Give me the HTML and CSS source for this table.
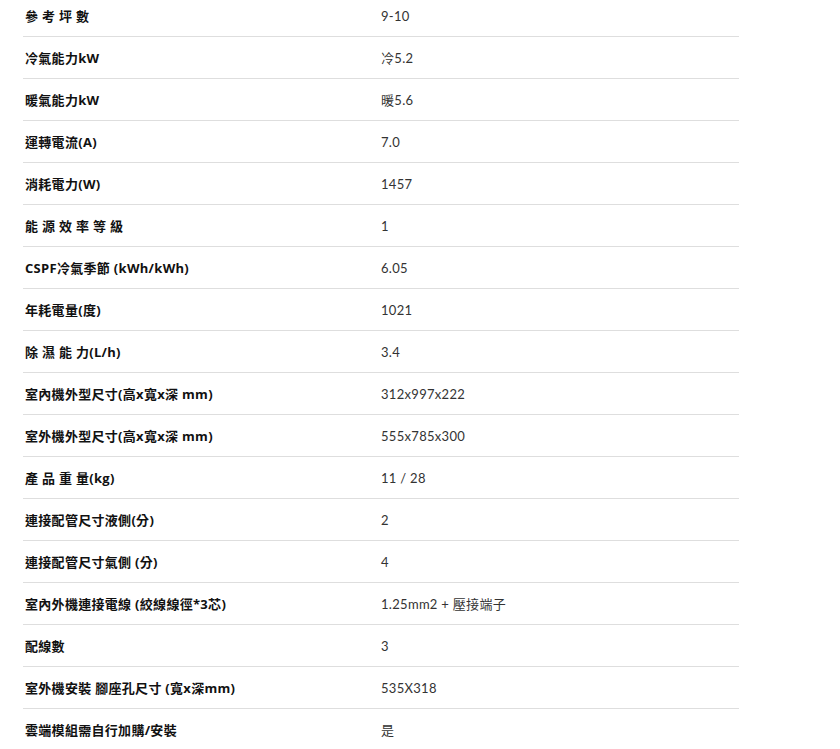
FILE: index.html
```html
<!DOCTYPE html>
<html lang="zh-Hant">
<head>
<meta charset="utf-8">
<link rel="stylesheet" href="styles.css">
</head>
<body>
<div class="spec">
  <div class="row"><div class="k">參 考 坪 數</div><div class="v">9-10</div></div>
  <div class="row"><div class="k">冷氣能力kW</div><div class="v">冷5.2</div></div>
  <div class="row"><div class="k">暖氣能力kW</div><div class="v">暖5.6</div></div>
  <div class="row"><div class="k">運轉電流(A)</div><div class="v">7.0</div></div>
  <div class="row"><div class="k">消耗電力(W)</div><div class="v">1457</div></div>
  <div class="row"><div class="k">能 源 效 率 等 級</div><div class="v">1</div></div>
  <div class="row"><div class="k">CSPF冷氣季節 (kWh/kWh)</div><div class="v">6.05</div></div>
  <div class="row"><div class="k">年耗電量(度)</div><div class="v">1021</div></div>
  <div class="row"><div class="k">除 濕 能 力(L/h)</div><div class="v">3.4</div></div>
  <div class="row"><div class="k">室內機外型尺寸(高x寬x深 mm)</div><div class="v">312x997x222</div></div>
  <div class="row"><div class="k">室外機外型尺寸(高x寬x深 mm)</div><div class="v">555x785x300</div></div>
  <div class="row"><div class="k">產 品 重 量(kg)</div><div class="v">11 / 28</div></div>
  <div class="row"><div class="k">連接配管尺寸液側(分)</div><div class="v">2</div></div>
  <div class="row"><div class="k">連接配管尺寸氣側 (分)</div><div class="v">4</div></div>
  <div class="row"><div class="k">室內外機連接電線 (絞線線徑*3芯)</div><div class="v">1.25mm2 + 壓接端子</div></div>
  <div class="row"><div class="k">配線數</div><div class="v">3</div></div>
  <div class="row"><div class="k">室外機安裝 腳座孔尺寸 (寬x深mm)</div><div class="v">535X318</div></div>
  <div class="row"><div class="k">雲端模組需自行加購/安裝</div><div class="v">是</div></div>
</div>
</body>
</html>
```
FILE: styles.css
```css
html, body {
  margin: 0;
  padding: 0;
  background: #fff;
}
body {
  font-family: "Lato", "Noto Sans CJK TC", sans-serif;
  font-size: 13px;
  color: #333;
  overflow: hidden;
}
.spec {
  width: 716px;
  margin: -5px 0 0 23px;
}
.row {
  display: grid;
  grid-template-columns: 358px 1fr;
  height: 41px;
  align-items: center;
  border-bottom: 1px solid #dedede;
}
.k {
  padding-left: 2px;
  font-family: "Open Sans", "Noto Sans CJK TC", sans-serif;
  font-weight: bold;
  letter-spacing: 0.3px;
  color: #111;
}
.v {
  font-weight: normal;
  letter-spacing: 0.3px;
  color: #333;
}
```
